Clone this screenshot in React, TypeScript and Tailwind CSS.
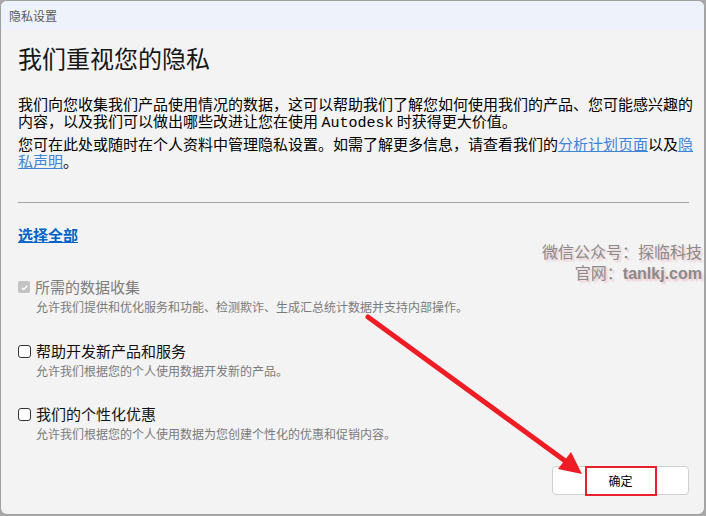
import React from "react";

const cjk = { fontFamily: '"Noto Sans CJK SC", "Noto Sans", sans-serif' };

function Check({ checked }: { checked?: boolean }) {
  if (checked) {
    return (
      <span className="w-[12px] h-[12px] rounded-[2px] bg-[#c3c3c3] flex items-center justify-center shrink-0">
        <svg width="9" height="9" viewBox="0 0 10 10">
          <path d="M2 5.2 L4.2 7.3 L8.2 2.8" fill="none" stroke="#ffffff" strokeWidth="1.4" />
        </svg>
      </span>
    );
  }
  return <span className="w-[13px] h-[13px] rounded-[3px] border border-[#333333] bg-white shrink-0" />;
}

function Item({ label, desc, checked, disabled, mt }: { label: string; desc: string; checked?: boolean; disabled?: boolean; mt: string }) {
  return (
    <div className={mt}>
      <div className="flex items-center gap-[5px] h-[20px]">
        <Check checked={checked} />
        <span className={`text-[15px] leading-[20px] ${disabled ? "text-[#7d7d7d]" : "text-[#111111]"}`}>{label}</span>
      </div>
      <div className="pl-[18px] h-[20px] text-[12px] leading-[20px] text-[#7a7a7a]">{desc}</div>
    </div>
  );
}

const line = "h-[17px] leading-[17px] overflow-visible whitespace-nowrap";

export default function App() {
  return (
    <div className="w-[706px] h-[516px] bg-[#a8a8a8] relative overflow-hidden" style={cjk}>
      <div className="w-[705px] h-[515px] rounded-[7px] border border-[#a0a0a0] overflow-hidden flex flex-col bg-[#f3f3f3]">
        <div className="h-[29px] bg-[#eef2fa] flex items-center pl-[8px] text-[12px] text-[#5a5a5a] shrink-0">隐私设置</div>
        <div className="flex-1 pl-[17px] pr-[15px] flex flex-col">
          <div className="mt-[12px] h-[32px] text-[24px] leading-[32px] text-[#161616]">我们重视您的隐私</div>
          <div className="mt-[21px] text-[15px] text-black">
            <div className={line}>我们向您收集我们产品使用情况的数据，这可以帮助我们了解您如何使用我们的产品、您可能感兴趣的</div>
            <div className={line}>
              内容，以及我们可以做出哪些改进让您在使用 <span style={{ fontFamily: '"Liberation Mono", monospace' }}>Autodesk</span> 时获得更大价值。
            </div>
          </div>
          <div className="mt-[6px] text-[15px] text-black">
            <div className={line}>
              您可在此处或随时在个人资料中管理隐私设置。如需了解更多信息，请查看我们的
              <span className="text-[#3f84d6] underline">分析计划页面</span>以及<span className="text-[#3f84d6] underline">隐</span>
            </div>
            <div className={line}>
              <span className="text-[#3f84d6] underline">私声明</span>。
            </div>
          </div>
          <div className="mt-[33px] h-px w-[671px] bg-[#a3a3a3] shrink-0" />
          <div className="mt-[22px] h-[20px] text-[15px] leading-[20px] font-bold text-[#0063c8] underline">选择全部</div>
          <Item mt="mt-[32px]" checked disabled label="所需的数据收集" desc="允许我们提供和优化服务和功能、检测欺诈、生成汇总统计数据并支持内部操作。" />
          <Item mt="mt-[24px]" label="帮助开发新产品和服务" desc="允许我们根据您的个人使用数据开发新的产品。" />
          <Item mt="mt-[23px]" label="我们的个性化优惠" desc="允许我们根据您的个人使用数据为您创建个性化的优惠和促销内容。" />
          <div className="mt-[22px] flex justify-end w-[671px]">
            <div className="w-[137px] h-[29px] bg-white border border-[#cfcfcf] rounded-[4px] flex items-center justify-center text-[12px] text-black">确定</div>
          </div>
        </div>
      </div>

      {/* red highlight */}
      <div className="absolute left-[585px] top-[466px] w-[72px] h-[30px] border-2 border-[#e8202a]" />

      {/* watermark */}
      <div className="absolute right-[4px] top-[241px] text-right text-[16px] leading-[21px] text-[#8a8a8a]" style={{ textShadow: "2px 2px 2px rgba(225,110,130,0.35)" }}>
        <div>微信公众号：探临科技</div>
        <div>
          官网：<span className="font-bold" style={{ fontFamily: '"Liberation Sans", Arial, sans-serif' }}>tanlkj.com</span>
        </div>
      </div>

      {/* arrow */}
      <svg className="absolute left-0 top-0 pointer-events-none" width="706" height="516" viewBox="0 0 706 516">
        <line x1="368" y1="317" x2="568" y2="463" stroke="#ee1c25" strokeWidth="5" strokeLinecap="round" />
        <polygon points="582,474 558,469 571,452" fill="#ee1c25" />
      </svg>
    </div>
  );
}
